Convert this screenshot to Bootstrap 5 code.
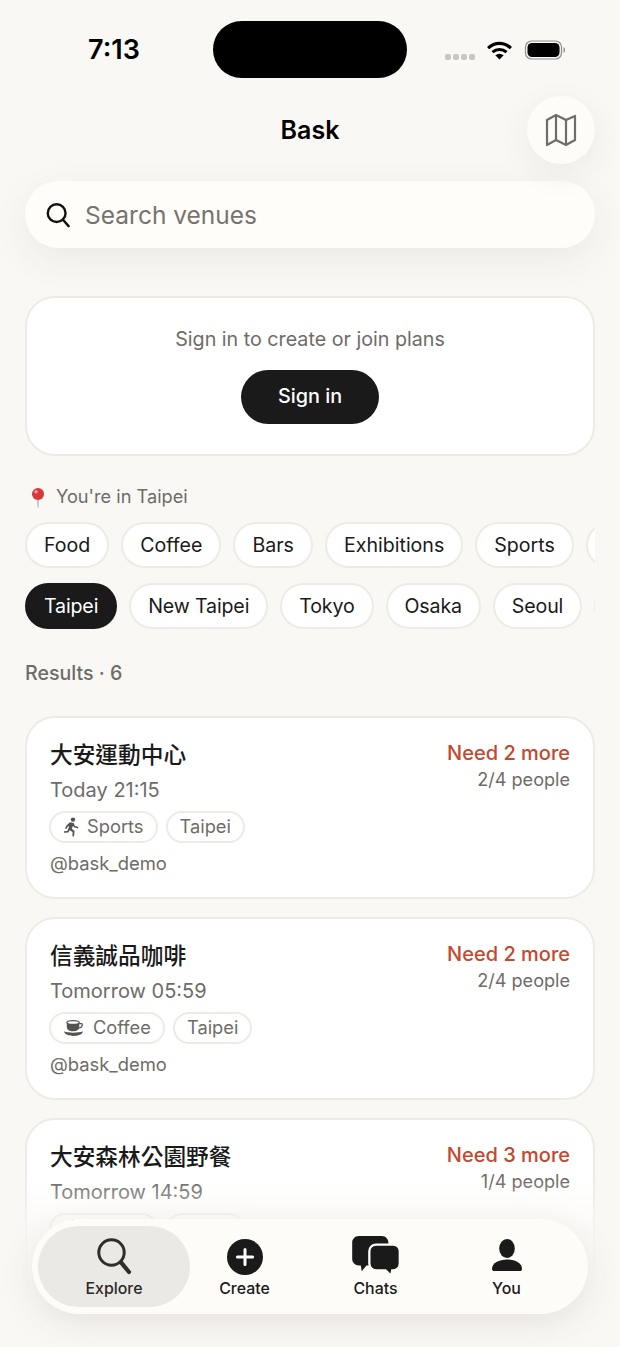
<!DOCTYPE html>
<html lang="en">
<head>
    <meta charset="UTF-8">
    <meta name="viewport" content="width=device-width, initial-scale=1.0">
    <title>Bask</title>
    <link href="https://cdn.jsdelivr.net/npm/bootstrap@5.3.0/dist/css/bootstrap.min.css" rel="stylesheet">
    <style>
        html, body {
            height: 100%;
            overflow: hidden;
        }
        body {
            background-color: #faf8f5;
            color: #1a1a1a;
            font-family: Inter, "Noto Sans CJK TC", sans-serif;
        }
        .phone {
            position: relative;
            width: 620px;
            height: 1347px;
            overflow: hidden;
        }
        .status-row {
            height: 96px;
            padding-top: 21px;
        }
        .status-time {
            width: 213px;
            padding-left: 15px;
            font-size: 27px;
            font-weight: 600;
            line-height: 58px;
            color: #000;
            text-align: center;
        }
        .island {
            width: 194px;
            height: 57px;
            background: #000;
            border-radius: 29px;
        }
        .status-icons {
            height: 58px;
            margin-left: 38px;
            gap: 12px;
        }
        .signal-row {
            gap: 2px;
            margin-top: 14px;
        }
        .signal-dot {
            width: 6px;
            height: 6px;
            background: #c9c7c4;
            border-radius: 2px;
        }
        .title-row {
            position: relative;
            height: 68px;
            margin: 0 25px;
        }
        .app-title {
            font-size: 25px;
            font-weight: 600;
            color: #000;
            margin: 0;
            line-height: 68px;
        }
        .map-btn {
            position: absolute;
            right: 0;
            top: 0;
            width: 68px;
            height: 68px;
            border: 0;
            background: #fdfcf8;
            box-shadow: 0 10px 32px rgba(60, 50, 40, .07);
        }
        .search-bar {
            height: 67px;
            margin: 17px 25px 0;
            padding: 0 21px;
            gap: 15px;
            background: #fefdf9;
            box-shadow: 0 12px 36px rgba(60, 50, 40, .07);
        }
        .search-input {
            padding: 2px 0 0;
            border: 0;
            background: transparent;
            font-size: 24.5px;
            color: #1a1a1a;
        }
        .search-input:focus {
            background: transparent;
            box-shadow: none;
        }
        .search-input::placeholder {
            color: #77746f;
            opacity: 1;
        }
        .signin-card {
            height: 160px;
            margin: 48px 25px 0;
            border: 2px solid #eeebe7;
            border-radius: 30px;
            background: #fff;
        }
        .signin-text {
            font-size: 19.7px;
            line-height: 28px;
            margin: 27px 0 17px;
            color: #6e6c68;
        }
        .signin-btn {
            width: 138px;
            height: 54px;
            padding: 0;
            background: #1a1a1a;
            border: 0;
            color: #fff;
            font-size: 19.8px;
            font-weight: 500;
        }
        .here-row {
            margin: 28px 25px 0 30px;
            height: 26px;
            gap: 10px;
            font-size: 18.2px;
            color: #6e6c68;
        }
        .chip-row {
            margin: 12px 25px 0;
            gap: 12px;
            overflow: hidden;
        }
        .chip-row + .chip-row {
            margin-top: 15px;
            letter-spacing: -.15px;
        }
        .chip {
            flex: none;
            height: 46px;
            padding: 0 17px;
            border: 2px solid #eeebe7;
            background: #fff;
            color: #1a1a1a;
            font-size: 19.6px;
            line-height: 42px;
        }
        .chip-peek {
            width: 60px;
        }
        .chip-on {
            background: #1a1a1a;
            border-color: #1a1a1a;
            color: #fff;
        }
        .results-label {
            margin: 29px 25px 28px;
            font-size: 19.6px;
            line-height: 30px;
            font-weight: 500;
            color: #6e6c68;
        }
        .venue-card {
            height: 183px;
            margin: 0 25px 18px;
            padding: 21px 23px 0;
            border: 2px solid #eeebe7;
            border-radius: 30px;
            background: #fff;
        }
        .venue-name {
            font-size: 22.7px;
            font-weight: 500;
            line-height: 32px;
            margin: 0;
        }
        .venue-when {
            font-size: 20px;
            line-height: 28px;
            margin-top: 5px;
            color: #6e6c68;
        }
        .venue-need {
            font-size: 20px;
            font-weight: 500;
            line-height: 26px;
            color: #c5472e;
            margin-top: 1px;
        }
        .venue-people {
            font-size: 18.1px;
            line-height: 26px;
            color: #6e6c68;
            text-align: right;
        }
        .tag-row {
            gap: 8px;
            margin: 7px 0 0 -1px;
        }
        .tag-pill {
            height: 32px;
            padding: 0 12px;
            gap: 8px;
            border: 2px solid #eeebe7;
            font-size: 18.3px;
            color: #6e6c68;
        }
        .venue-user {
            font-size: 18.4px;
            line-height: 28px;
            margin-top: 6px;
            color: #6e6c68;
        }
        .bottom-fade {
            position: absolute;
            left: 0;
            right: 0;
            bottom: 0;
            height: 167px;
            background: linear-gradient(to bottom, rgba(250, 248, 245, 0) 0%, rgba(250, 248, 245, .75) 30%, rgba(250, 248, 245, .93) 70%, rgba(250, 248, 245, .96) 100%);
            pointer-events: none;
        }
        .tab-bar {
            position: absolute;
            left: 32px;
            top: 1219px;
            width: 556px;
            height: 95px;
            padding: 7px 6px;
            background: #fefcf9;
            box-shadow: 0 10px 34px rgba(60, 50, 40, .1);
        }
        .tab-item {
            flex: none;
            width: 131px;
            height: 81px;
            font-size: 15.9px;
            font-weight: 500;
            line-height: 20px;
            color: #1a1a1a;
        }
        .tab-item svg {
            display: block;
            margin-bottom: 3px;
        }
        .tab-active {
            width: 152px;
            margin-right: -11px;
            background: #ebe9e6;
            color: #2a2928;
        }
    </style>
</head>
<body>
    <div class="phone">
        <!-- status bar -->
        <div class="status-row d-flex align-items-start">
            <div class="status-time">7:13</div>
            <div class="island"></div>
            <div class="status-icons d-flex align-items-center">
                <div class="signal-row d-flex">
                    <span class="signal-dot"></span><span class="signal-dot"></span><span class="signal-dot"></span><span class="signal-dot"></span>
                </div>
                <svg width="25" height="19" viewBox="0 0 26 20"><path d="M1 7.5 C8 .8 18 .8 25 7.5" fill="none" stroke="#000" stroke-width="3.4"/><path d="M5.6 11.8 C10 8 16 8 20.4 11.8" fill="none" stroke="#000" stroke-width="3.2"/><path d="M8.6 15 C11.5 12.8 14.5 12.8 17.4 15 L13 19.6Z" fill="#000"/></svg>
                <svg width="43" height="20" viewBox="0 0 42 20"><rect x="1" y="1" width="36" height="18" rx="6" fill="none" stroke="#8e8d8b" stroke-width="1.2"/><rect x="3" y="3" width="32" height="14" rx="4.4" fill="#000"/><path d="M39 7 C41 8 41 12 39 13Z" fill="#8e8d8b"/></svg>
            </div>
        </div>

        <!-- header -->
        <div class="title-row text-center">
            <h1 class="app-title">Bask</h1>
            <button class="map-btn rounded-circle d-flex align-items-center justify-content-center" type="button" aria-label="Map">
                <svg width="32" height="34" viewBox="0 0 32 34" fill="none" stroke="#6f6d69" stroke-width="2.2" stroke-linejoin="round"><path d="M2 7 L11 2 L21 7 L30 3 V27 L21 32 L11 27 L2 32Z"/><path d="M11 2 V27 M21 7 V32"/></svg>
            </button>
        </div>

        <!-- search -->
        <div class="search-bar rounded-pill d-flex align-items-center">
            <svg width="26" height="28" viewBox="0 0 26 28" fill="none" stroke="#111" stroke-width="2.6" stroke-linecap="round"><circle cx="11.5" cy="12" r="9.6"/><path d="M18.6 19.4 L24.4 26"/></svg>
            <input class="form-control search-input" type="text" placeholder="Search venues">
        </div>

        <!-- sign in -->
        <div class="signin-card card text-center align-items-center">
            <p class="signin-text">Sign in to create or join plans</p>
            <button class="btn signin-btn rounded-pill" type="button">Sign in</button>
        </div>

        <!-- location -->
        <div class="here-row d-flex align-items-center">
            <svg width="16" height="21" viewBox="0 0 18 23"><path d="M8.1 12 H9.9 L9.4 23 H8.6Z" fill="#a8a29c"/><circle cx="9" cy="7.5" r="6.8" fill="#d9383a"/><circle cx="6.8" cy="5" r="1.9" fill="#f3a09c"/></svg>
            <span>You're in Taipei</span>
        </div>

        <div class="chip-row d-flex">
            <span class="chip rounded-pill">Food</span>
            <span class="chip rounded-pill">Coffee</span>
            <span class="chip rounded-pill">Bars</span>
            <span class="chip rounded-pill">Exhibitions</span>
            <span class="chip rounded-pill">Sports</span>
            <span class="chip chip-peek rounded-pill"></span>
        </div>
        <div class="chip-row d-flex">
            <span class="chip chip-on rounded-pill">Taipei</span>
            <span class="chip rounded-pill">New Taipei</span>
            <span class="chip rounded-pill">Tokyo</span>
            <span class="chip rounded-pill">Osaka</span>
            <span class="chip rounded-pill">Seoul</span>
            <span class="chip chip-peek rounded-pill"></span>
        </div>

        <div class="results-label">Results · 6</div>

        <!-- venue cards -->
        <div class="venue-card card d-block">
            <div class="d-flex justify-content-between">
                <div>
                    <h2 class="venue-name">大安運動中心</h2>
                    <div class="venue-when">Today 21:15</div>
                </div>
                <div>
                    <div class="venue-need">Need 2 more</div>
                    <div class="venue-people">2/4 people</div>
                </div>
            </div>
            <div class="tag-row d-flex">
                <span class="tag-pill rounded-pill d-inline-flex align-items-center">
                    <svg width="16" height="20" viewBox="0 0 16 20" fill="#55534f"><circle cx="10" cy="2.6" r="2.2"/><path d="M7 5.2 L10.6 6 L12 9 L15.4 10 L15 11.4 L11 10.3 L10 8.8 L8.8 11.8 L11.6 14 L11 19.4 L9.4 19.2 L9.6 15 L6.6 13.2 L5.4 15.6 L1 15.8 L1 14.2 L4.4 14 L6.2 9 L4.6 9.8 L3.4 12 L2 11.4 L3.4 8.6Z"/></svg>
                    Sports
                </span>
                <span class="tag-pill rounded-pill d-inline-flex align-items-center">Taipei</span>
            </div>
            <div class="venue-user">@bask_demo</div>
        </div>

        <div class="venue-card card d-block">
            <div class="d-flex justify-content-between">
                <div>
                    <h2 class="venue-name">信義誠品咖啡</h2>
                    <div class="venue-when">Tomorrow 05:59</div>
                </div>
                <div>
                    <div class="venue-need">Need 2 more</div>
                    <div class="venue-people">2/4 people</div>
                </div>
            </div>
            <div class="tag-row d-flex">
                <span class="tag-pill rounded-pill d-inline-flex align-items-center">
                    <svg width="22" height="18" viewBox="0 0 23 18"><path d="M4 3 H17 V8 C17 11 14 12.5 10.5 12.5 C7 12.5 4 11 4 8Z" fill="#55534f"/><path d="M17 4.5 H19.4 C20.6 4.5 20.6 8.4 17 9" fill="none" stroke="#55534f" stroke-width="1.4"/><ellipse cx="10.5" cy="3.2" rx="6.5" ry="2" fill="#fff" stroke="#55534f" stroke-width="1.3"/><path d="M1 12.5 C5 14.5 16 14.5 21 12.5 C20 16 16 17.4 11 17.4 C6 17.4 2 16 1 12.5Z" fill="#55534f"/></svg>
                    Coffee
                </span>
                <span class="tag-pill rounded-pill d-inline-flex align-items-center">Taipei</span>
            </div>
            <div class="venue-user">@bask_demo</div>
        </div>

        <div class="venue-card card d-block">
            <div class="d-flex justify-content-between">
                <div>
                    <h2 class="venue-name">大安森林公園野餐</h2>
                    <div class="venue-when">Tomorrow 14:59</div>
                </div>
                <div>
                    <div class="venue-need">Need 3 more</div>
                    <div class="venue-people">1/4 people</div>
                </div>
            </div>
            <div class="tag-row d-flex">
                <span class="tag-pill rounded-pill d-inline-flex align-items-center">
                    <svg width="16" height="20" viewBox="0 0 16 20" fill="#55534f"><circle cx="10" cy="2.6" r="2.2"/></svg>
                    Sports
                </span>
                <span class="tag-pill rounded-pill d-inline-flex align-items-center">Taipei</span>
            </div>
            <div class="venue-user">@bask_demo</div>
        </div>

        <div class="venue-card card d-block"></div>

        <div class="bottom-fade"></div>

        <!-- tab bar -->
        <nav class="tab-bar rounded-pill d-flex">
            <div class="tab-item tab-active rounded-pill d-flex flex-column align-items-center justify-content-end">
                <svg width="36" height="39" viewBox="0 0 36 39" fill="none" stroke="#2f2e2c" stroke-linecap="round"><circle cx="15.5" cy="15.5" r="12.7" stroke-width="3"/><path d="M25 25.4 L33 35" stroke-width="4.2"/></svg>
                <span class="mb-2">Explore</span>
            </div>
            <div class="tab-item d-flex flex-column align-items-center justify-content-end">
                <svg width="36" height="39" viewBox="0 0 36 39"><circle cx="18" cy="20" r="18" fill="#1a1a1a"/><path d="M18 12.4 V27.6 M10.4 20 H25.6" stroke="#fff" stroke-width="3" stroke-linecap="round"/></svg>
                <span class="mb-2">Create</span>
            </div>
            <div class="tab-item d-flex flex-column align-items-center justify-content-end">
                <svg width="50" height="40" viewBox="0 0 50 42"><path d="M7 0 H31 C35 0 38 3 38 7 V24 C38 28 35 31 31 31 H15 L10 37 L9 31 H7 C3 31 0 28 0 24 V7 C0 3 3 0 7 0Z" fill="#1a1a1a"/><path d="M25 9 H43 C47 9 50 12 50 16 V29 C50 33 47 36 43 36 H42 L41 42 L35 36 H25 C21 36 18 33 18 29 V16 C18 12 21 9 25 9Z" fill="#1a1a1a" stroke="#fefcf9" stroke-width="2.4"/></svg>
                <span class="mb-2">Chats</span>
            </div>
            <div class="tab-item d-flex flex-column align-items-center justify-content-end">
                <svg width="32" height="39" viewBox="0 0 32 39" fill="#1a1a1a"><ellipse cx="16" cy="11.5" rx="7.8" ry="9.5"/><path d="M1 32 C1 26 8 22.6 16 22.6 C24 22.6 31 26 31 32 C31 33.4 30 34 29 34 H3 C2 34 1 33.4 1 32Z"/></svg>
                <span class="mb-2">You</span>
            </div>
        </nav>
    </div>

    <script src="https://cdn.jsdelivr.net/npm/bootstrap@5.3.0/dist/js/bootstrap.bundle.min.js"></script>
</body>
</html>
